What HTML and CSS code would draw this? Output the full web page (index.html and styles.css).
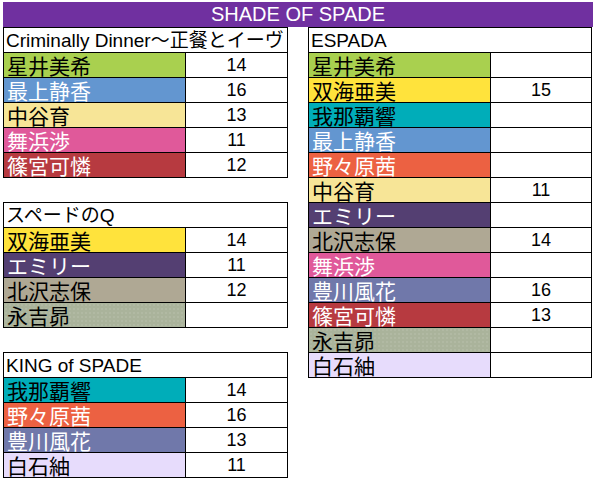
FILE: index.html
```html
<!DOCTYPE html>
<html lang="ja">
<head>
<meta charset="utf-8">
<title>SHADE OF SPADE</title>
<link rel="stylesheet" href="styles.css">
</head>
<body>
<div class="sheet">
  <div class="title">SHADE OF SPADE</div>
  <div class="cols">
    <div class="col-left">
      <div class="tbl">
        <div class="hdr">Criminally Dinner〜正餐とイーヴ</div>
        <div class="name miki">星井美希</div><div class="num">14</div>
        <div class="name shizuka">最上静香</div><div class="num">16</div>
        <div class="name iku">中谷育</div><div class="num">13</div>
        <div class="name ayumu">舞浜渉</div><div class="num">11</div>
        <div class="name karen">篠宮可憐</div><div class="num">12</div>
      </div>
      <div class="tbl">
        <div class="hdr">スペードのQ</div>
        <div class="name ami">双海亜美</div><div class="num">14</div>
        <div class="name emily">エミリー</div><div class="num">11</div>
        <div class="name shiho">北沢志保</div><div class="num">12</div>
        <div class="name subaru">永吉昴</div><div class="num"></div>
      </div>
      <div class="tbl">
        <div class="hdr">KING of SPADE</div>
        <div class="name hibiki">我那覇響</div><div class="num">14</div>
        <div class="name akane">野々原茜</div><div class="num">16</div>
        <div class="name fuka">豊川風花</div><div class="num">13</div>
        <div class="name tsumugi">白石紬</div><div class="num">11</div>
      </div>
    </div>
    <div class="col-right">
      <div class="tbl tbl-right">
        <div class="hdr">ESPADA</div>
        <div class="name miki">星井美希</div><div class="num"></div>
        <div class="name ami">双海亜美</div><div class="num">15</div>
        <div class="name hibiki">我那覇響</div><div class="num"></div>
        <div class="name shizuka">最上静香</div><div class="num"></div>
        <div class="name akane">野々原茜</div><div class="num"></div>
        <div class="name iku">中谷育</div><div class="num">11</div>
        <div class="name emily">エミリー</div><div class="num"></div>
        <div class="name shiho">北沢志保</div><div class="num">14</div>
        <div class="name ayumu">舞浜渉</div><div class="num"></div>
        <div class="name fuka">豊川風花</div><div class="num">16</div>
        <div class="name karen">篠宮可憐</div><div class="num">13</div>
        <div class="name subaru">永吉昴</div><div class="num"></div>
        <div class="name tsumugi">白石紬</div><div class="num"></div>
      </div>
    </div>
  </div>
</div>
</body>
</html>
```
FILE: styles.css
```css
* { box-sizing: border-box; }
html, body { margin: 0; padding: 0; background: #ffffff; }
body { font-family: "Liberation Sans", "Noto Sans CJK JP", sans-serif; color: #000; }

.sheet { padding: 2px 0 0 3px; width: 593px; }

.title {
  width: 590px;
  height: 25px;
  background: #7030a0;
  color: #ffffff;
  font-size: 20px;
  line-height: 25px;
  text-align: center;
}

.cols { display: flex; gap: 20px; align-items: flex-start; }
.col-left { display: flex; flex-direction: column; gap: 24px; }

.tbl {
  display: grid;
  grid-template-columns: 182px 102px;
  grid-auto-rows: 25px;
  border-top: 1px solid #000;
  border-left: 1px solid #000;
}
.tbl-right { grid-template-columns: 182px 101px; }

.tbl > div {
  border-right: 1px solid #000;
  border-bottom: 1px solid #000;
  white-space: nowrap;
}

.hdr {
  grid-column: 1 / -1;
  font-size: 19px;
  line-height: 25px;
  padding-left: 2px;
  background: #fff;
}

.name {
  font-family: "Noto Sans CJK JP", sans-serif;
  font-weight: 400;
  font-size: 21px;
  line-height: 25px;
  padding-left: 3px;
}

.num {
  font-size: 18px;
  line-height: 25px;
  text-align: center;
  background: #fff;
}

.miki { background: #a9d04f; }
.shizuka { background: #6396d0; color: #fff; }
.iku { background: #f7e597; }
.ayumu { background: #e0599a; color: #fff; }
.karen { background: #b73a40; color: #fff; }
.ami { background: #ffe33c; }
.emily { background: #543f72; color: #fff; }
.shiho { background: #afa894; }
.subaru {
  background-color: #aab39b;
  background-image: radial-gradient(circle, rgba(255,255,255,0.12) 0.6px, transparent 0.9px);
  background-size: 4px 4px;
}
.hibiki { background: #00adb9; }
.akane { background: #ec6142; color: #fff; }
.fuka { background: #7078aa; color: #fff; }
.tsumugi { background: #e7dcfc; }
```
